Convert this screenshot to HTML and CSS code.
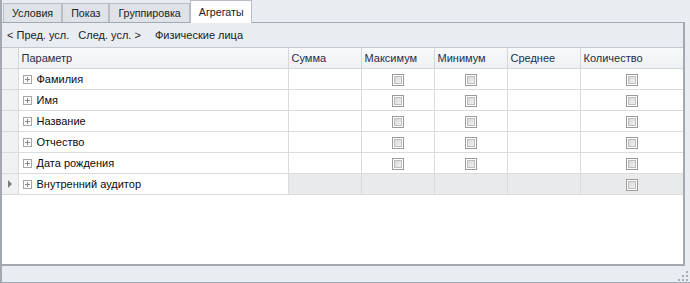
FILE: index.html
```html
<!DOCTYPE html>
<html lang="ru">
<head>
  <meta charset="UTF-8">
  <title>Агрегаты</title>
  <link rel="stylesheet" href="styles.css">
</head>
<body>
  <div class="frame">
    <!-- Tab strip -->
    <div class="tabs">
      <div class="tab">Условия</div>
      <div class="tab">Показ</div>
      <div class="tab">Группировка</div>
      <div class="tab active">Агрегаты</div>
    </div>

    <div class="page">
      <!-- Navigation toolbar -->
      <div class="toolbar">
        <span class="nav">&lt; Пред. усл.</span>
        <span class="nav">След. усл. &gt;</span>
        <span class="nav caption">Физические лица</span>
      </div>

      <!-- Aggregates grid -->
      <div class="grid">
        <table>
          <colgroup>
            <col class="c-ind">
            <col class="c-param">
            <col class="c-num">
            <col class="c-num">
            <col class="c-num">
            <col class="c-num">
            <col class="c-count">
          </colgroup>
          <thead>
            <tr>
              <th class="ind"></th>
              <th>Параметр</th>
              <th>Сумма</th>
              <th>Максимум</th>
              <th>Минимум</th>
              <th>Среднее</th>
              <th>Количество</th>
            </tr>
          </thead>
          <tbody id="rows"></tbody>
        </table>
      </div>
    </div>

    <div class="status">
      <svg class="grip" width="11" height="11" viewBox="0 0 11 11">
        <rect x="8" y="0" width="2" height="2" fill="#a9aeb5"/>
        <rect x="4" y="4" width="2" height="2" fill="#a9aeb5"/>
        <rect x="8" y="4" width="2" height="2" fill="#a9aeb5"/>
        <rect x="0" y="8" width="2" height="2" fill="#a9aeb5"/>
        <rect x="4" y="8" width="2" height="2" fill="#a9aeb5"/>
        <rect x="8" y="8" width="2" height="2" fill="#a9aeb5"/>
      </svg>
    </div>
  </div>

  <script>
    // which aggregate checkboxes each parameter offers: sum, max, min, avg, count
    const rows = [
      { name: 'Фамилия',            checks: [0, 1, 1, 0, 1] },
      { name: 'Имя',                checks: [0, 1, 1, 0, 1] },
      { name: 'Название',           checks: [0, 1, 1, 0, 1] },
      { name: 'Отчество',           checks: [0, 1, 1, 0, 1] },
      { name: 'Дата рождения',      checks: [0, 1, 1, 0, 1] },
      { name: 'Внутренний аудитор', checks: [0, 0, 0, 0, 1], focused: true }
    ];

    const plus =
      '<svg class="plus" width="9" height="9" viewBox="0 0 9 9">' +
      '<rect x="0.5" y="0.5" width="8" height="8" fill="#fbfbfb" stroke="#a6a6a6"/>' +
      '<path d="M2 4.5h5M4.5 2v5" stroke="#8a8a8a"/></svg>';

    const body = document.getElementById('rows');
    rows.forEach(r => {
      const tr = document.createElement('tr');
      if (r.focused) tr.className = 'focused';

      let html = '<td class="ind">' + (r.focused ? '<span class="arrow"></span>' : '') + '</td>';
      html += '<td class="param"><div class="name">' + plus + '<span>' + r.name + '</span></div></td>';
      r.checks.forEach(c => {
        html += '<td class="agg">' + (c ? '<span class="check"><span></span></span>' : '') + '</td>';
      });
      tr.innerHTML = html;
      body.appendChild(tr);
    });
  </script>
</body>
</html>
```

FILE: styles.css
```css
body {
  margin: 0;
  font-family: 'Liberation Sans', Arial, sans-serif;
  font-size: 11px;
  color: #0c0c0c;
  background: #e9ecf0;
}

.frame {
  width: 690px;
  height: 283px;
  box-sizing: border-box;
  border-left: 2px solid #a3a9b1;
  border-bottom: 1px solid #a3a9b1;
  background: #e9ecf0;
  display: flex;
  flex-direction: column;
}

/* Tabs */
.tabs {
  height: 22px;
  display: flex;
  align-items: flex-end;
  padding-left: 1px;
}
.tab {
  height: 19px;
  line-height: 19px;
  padding: 0 8px;
  box-sizing: border-box;
  background: #dfe3e8;
  border: 1px solid #b9bec6;
  border-bottom: none;
  color: #222;
  font-size: 10.7px;
}
.tab.active {
  height: 23px;
  line-height: 22px;
  margin-bottom: -1px;
  background: #fff;
  padding: 0 7px 0 8px;
  position: relative;
  z-index: 1;
}

/* Tab page */
.page {
  flex: 1;
  width: 683px;
  box-sizing: border-box;
  border-top: 1px solid #a3a9b1;
  border-right: 2px solid #a3a9b1;
  border-bottom: 2px solid #a3a9b1;
  display: flex;
  flex-direction: column;
}

.toolbar {
  height: 24px;
  display: flex;
  align-items: center;
  gap: 9px;
  padding-left: 5px;
  color: #222;
}
.toolbar .caption { margin-left: 5px; }

.grid {
  flex: 1;
  background: #fff;
  border-top: 1px solid #c3c8cf;
}

table {
  border-collapse: collapse;
  table-layout: fixed;
  width: 681px;
}
.c-ind   { width: 16px; }
.c-param { width: 270px; }
.c-num   { width: 73px; }
.c-count { width: 103px; }

th, td {
  height: 20px;
  padding: 0 3px;
  border: 1px solid #d9dbdf;
  text-align: left;
  white-space: nowrap;
  overflow: hidden;
}
th {
  font-weight: normal;
  color: #1e2d4a;
  background: linear-gradient(#f8f9fa, #eef0f3);
  border-color: #d3d6db;
  border-top: none;
}
th:last-child, td:last-child { border-right: none; }

.ind {
  background: #f0f1f3;
  border-left: none;
  padding: 0;
  position: relative;
}
.arrow {
  position: absolute;
  left: 6px;
  top: 6px;
  border-left: 4px solid #7b7f85;
  border-top: 4px solid transparent;
  border-bottom: 4px solid transparent;
}

.param { padding-left: 4px; }
.name {
  display: flex;
  align-items: center;
  gap: 5px;
}
.name svg { flex: none; }

.agg { text-align: center; padding: 0; }

.check {
  display: inline-block;
  vertical-align: middle;
  width: 12px;
  height: 12px;
  box-sizing: border-box;
  border: 1px solid #9a9a9a;
  padding: 1px;
  background: #fff;
}
.check span {
  display: block;
  width: 8px;
  height: 8px;
  box-sizing: border-box;
  border: 1px solid #bdbdbd;
  background: linear-gradient(135deg, #d8d8d8, #f1f1f1);
}

tr.focused td.agg { background: #e9eaec; }

/* Bottom status strip with size grip */
.status {
  height: 16px;
  position: relative;
}
.grip {
  position: absolute;
  right: 1px;
  bottom: 0;
}
```
